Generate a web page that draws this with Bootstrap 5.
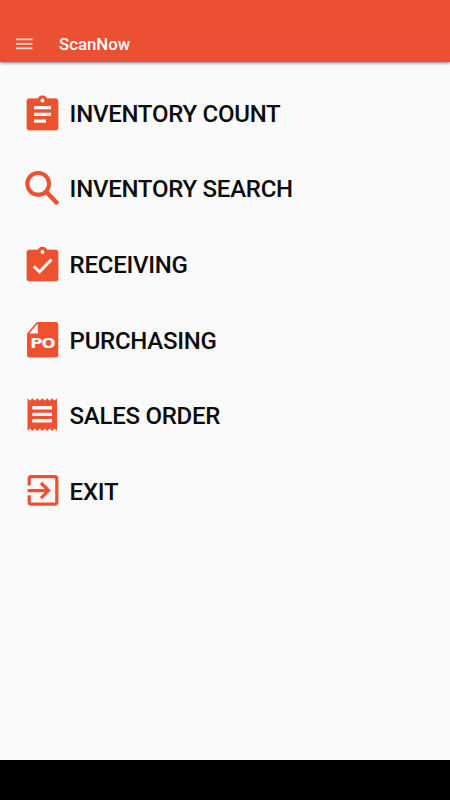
<!DOCTYPE html>
<html lang="en">
<head>
<meta charset="utf-8">
<meta name="viewport" content="width=device-width, initial-scale=1">
<title>ScanNow</title>
<link href="https://cdn.jsdelivr.net/npm/bootstrap@5.3.0/dist/css/bootstrap.min.css" rel="stylesheet">
<style>
body{font-family:Roboto,"Liberation Sans",sans-serif;background:#fafafa}
.app-bar{height:62px;padding:26px 0 0 15.500px;background:#eb5033;box-shadow:0 1px 3px rgba(0,0,0,.5);z-index:1}
.app-title{font-size:16.8px;font-weight:500;line-height:36px;margin-left:26.500px}
.menu-list{padding:14px 0 0 20px}
.menu-item{height:75.6px;color:#0c0c0c;font-size:24px;font-weight:500;line-height:28px;letter-spacing:-.26px}
.menu-item svg{width:42px;height:44px;flex:none;margin-right:7.6px;fill:#ee5030}
.soft{filter:drop-shadow(0 .6px .5px rgba(0,0,0,.25))}
.cut{fill:#fafafa}
.po-label{font:700 13.5px "DejaVu Sans",sans-serif;letter-spacing:-.7px}
.system-bar{height:40px}
</style>
</head>
<body class="vh-100 d-flex flex-column overflow-hidden">
<header class="app-bar d-flex align-items-center text-white">
  <svg width="17" height="12" viewBox="0 0 17 12" fill="#fff" fill-opacity=".78"><path d="M0 .6h16.500v1.600H0zM0 5.100h16.500v1.600H0zM0 9.600h16.500v1.600H0z"/></svg>
  <span class="app-title">ScanNow</span>
</header>
<main class="menu-list flex-grow-1">
  <a class="menu-item d-flex align-items-center text-decoration-none" href="#">
    <svg viewBox="20 91.8 42 44"><g class="soft"><path d="M29.5 98.4H38a4.8 4.8 0 0 1 9 0h8.500a2.800 2.800 0 0 1 2.800 2.800v26a2.800 2.800 0 0 1-2.800 2.800h-26a2.800 2.800 0 0 1-2.800-2.800v-26a2.800 2.800 0 0 1 2.800-2.800z"/></g><path class="cut" d="M34 105.800h17v3.200H34zM34 112.500h17v3.200H34zM34 119.300h12v3.200H34z"/><circle class="cut" cx="42.500" cy="100.300" r="1.900"/></svg>
    <span>INVENTORY COUNT</span>
  </a>
  <a class="menu-item d-flex align-items-center text-decoration-none" href="#">
    <svg viewBox="20 166.700 42 44"><g class="soft" fill="none" stroke="#ee5030"><circle cx="38.200" cy="183.500" r="10.900" stroke-width="3.900"/><path d="M46.200 191.500l11.500 12" stroke-width="4.300"/></g></svg>
    <span>INVENTORY SEARCH</span>
  </a>
  <a class="menu-item d-flex align-items-center text-decoration-none" href="#">
    <svg viewBox="20 243 42 44"><g class="soft"><path d="M29.500 249.800H38a4.800 4.800 0 0 1 9 0h8.500a2.800 2.800 0 0 1 2.800 2.800v25.800a2.800 2.800 0 0 1-2.800 2.800h-26a2.800 2.800 0 0 1-2.800-2.800v-25.800a2.800 2.800 0 0 1 2.800-2.800z"/></g><circle class="cut" cx="42.500" cy="252" r="1.900"/><path d="M33.800 266.200l5.700 5.700 12-12.400" fill="none" stroke="#fafafa" stroke-width="3"/></svg>
    <span>RECEIVING</span>
  </a>
  <a class="menu-item d-flex align-items-center text-decoration-none" href="#">
    <svg viewBox="20 318.600 42 44"><path d="M37 321.500h18.800a2.500 2.500 0 0 1 2.500 2.500v30.600a2.500 2.500 0 0 1-2.500 2.500H29.500a2.500 2.500 0 0 1-2.500-2.500V333z"/><path class="cut" d="M37.800 323v10h-8.500z"/><text class="cut po-label" transform="translate(30.200 347.700) scale(1.23 1)">PO</text></svg>
    <span>PURCHASING</span>
  </a>
  <a class="menu-item d-flex align-items-center text-decoration-none" href="#">
    <svg viewBox="20 394.200 42 44"><path d="M27.500 398.500l2.460 2.500 2.460-2.500 2.460 2.500 2.460-2.500 2.460 2.500 2.460-2.500 2.460 2.500 2.460-2.500 2.460 2.500 2.460-2.500 2.460 2.500 2.440-2.500v32.700l-2.440-2.500-2.460 2.500-2.460-2.500-2.460 2.500-2.460-2.500-2.460 2.500-2.460-2.500-2.460 2.500-2.460-2.500-2.460 2.500-2.460-2.500-2.460 2.500z"/><path class="cut" d="M32.300 406.300h19.700v3.300H32.300zM32.300 412.900h19.700v3.200H32.300zM32.300 419.300h19.700v3.300H32.300z"/></svg>
    <span>SALES ORDER</span>
  </a>
  <a class="menu-item d-flex align-items-center text-decoration-none" href="#">
    <svg viewBox="20 469.800 42 44"><g fill="none" stroke="#ee5030" stroke-width="3.200"><path d="M29.200 485.300v-6.800a2 2 0 0 1 2-2h23.600a2 2 0 0 1 2 2v23.400a2 2 0 0 1-2 2H31.200a2 2 0 0 1-2-2v-6.800"/><path d="M27.600 490.400h20.500M41 482.800l7.600 7.600-7.600 7.600"/></g></svg>
    <span>EXIT</span>
  </a>
</main>
<footer class="system-bar bg-black"></footer>
<script src="https://cdn.jsdelivr.net/npm/bootstrap@5.3.0/dist/js/bootstrap.bundle.min.js"></script>
</body>
</html>
